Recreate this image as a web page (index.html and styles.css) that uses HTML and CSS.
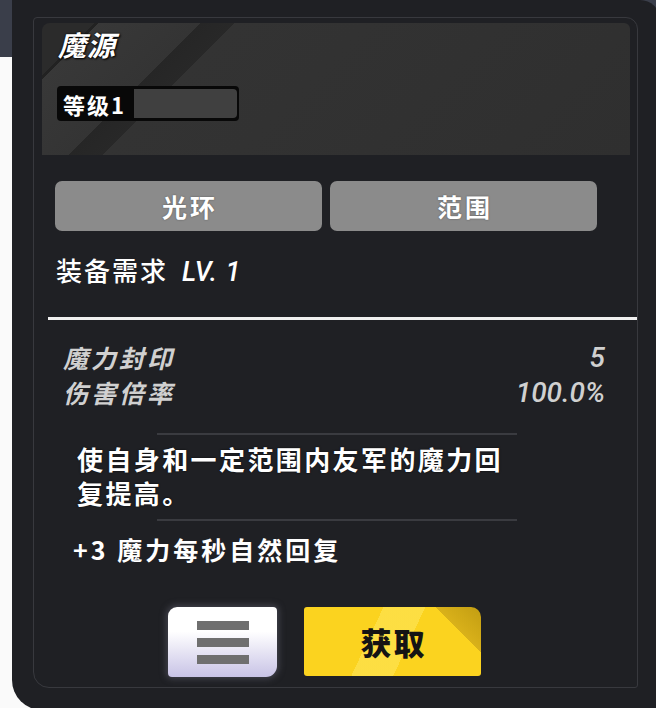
FILE: index.html
```html
<!DOCTYPE html>
<html lang="zh">
<head>
    <meta charset="UTF-8">
    <meta name="viewport" content="width=device-width, initial-scale=1.0">
    <title>魔源</title>
    <link rel="stylesheet" href="styles.css">
</head>
<body>
    <div class="panel">
        <div class="frame">
            <div class="banner">
                <div class="banner-title">魔源</div>
                <div class="level">
                    <span class="level-label">等级1</span>
                    <span class="level-bar"></span>
                </div>
            </div>

            <div class="tabs">
                <div class="tab">光环</div>
                <div class="tab">范围</div>
            </div>

            <div class="require">装备需求<span class="lv">LV. 1</span></div>
            <div class="rule"></div>

            <div class="stats">
                <div class="stat"><span class="stat-name">魔力封印</span><span class="stat-value">5</span></div>
                <div class="stat"><span class="stat-name">伤害倍率</span><span class="stat-value">100.0%</span></div>
            </div>

            <div class="divider"></div>
            <p class="desc">使自身和一定范围内友军的魔力回<br>复提高。</p>
            <div class="divider"></div>
            <p class="effect">+3 魔力每秒自然回复</p>

            <div class="actions">
                <button class="menu-btn"><span></span><span></span><span></span></button>
                <button class="get-btn">获取</button>
            </div>
        </div>
    </div>
</body>
</html>
```

FILE: styles.css
```css
html, body {
    margin: 0;
    overflow: hidden;
}
body {
    height: 708px;
    background: linear-gradient(#3a3e4a, #3a3e4a) no-repeat 0 0 / 100% 57px, #fafafa;
    font-family: "Noto Sans CJK SC", sans-serif;
    color: #fff;
}
.panel {
    margin-left: 12px;
    width: 648px;
    height: 710px;
    padding: 17px 0 0 21px;
    box-sizing: border-box;
    background: #1f2024;
    border-radius: 0 20px 0 30px;
}
.frame {
    width: 605px;
    height: 671px;
    box-sizing: border-box;
    padding: 5px 0 0 8px;
    border: 1px solid #38393e;
    border-radius: 4px 12px 3px 16px;
    display: flex;
    flex-direction: column;
}

/* header */
.banner {
    width: 588px;
    height: 132px;
    box-sizing: border-box;
    padding: 4px 0 0 16px;
    border-radius: 8px 6px 0 0;
    background: linear-gradient(135deg,
        #2b2b2b 0, #2b2b2b 37px,
        #222222 37px, #222222 40px,
        #383838 40px, #343434 112px,
        #262626 112px, #282828 136px,
        #333333 136px, #2f2f2f 100%);
}
.banner-title {
    font-size: 28px;
    line-height: 34px;
    font-weight: 700;
    font-style: italic;
    letter-spacing: 1px;
    text-shadow: 1px 1px 2px #000, 0 0 2px #000;
}
.level {
    margin: 25px 0 0 -1px;
    width: 182px;
    height: 35px;
    box-sizing: border-box;
    padding: 0 2px 0 6px;
    display: flex;
    align-items: center;
    background: #080808;
    border-radius: 4px;
}
.level-label {
    width: 71px;
    font-size: 22px;
    font-weight: 700;
    letter-spacing: 2px;
}
.level-bar {
    flex: 1;
    height: 29px;
    background: #404040;
    border-radius: 0 4px 4px 0;
}

/* tabs */
.tabs {
    display: flex;
    gap: 8px;
    margin: 26px 0 0 13px;
}
.tab {
    width: 267px;
    height: 50px;
    padding-left: 3px;
    box-sizing: border-box;
    display: flex;
    align-items: center;
    justify-content: center;
    background: #8b8b8b;
    border-radius: 7px;
    font-size: 25px;
    font-weight: 700;
    letter-spacing: 3px;
    text-shadow: 0 0 2px rgba(0, 0, 0, 0.4);
}

.require {
    margin: 24px 0 0 14px;
    font-size: 26px;
    line-height: 30px;
    font-weight: 500;
    letter-spacing: 2px;
}
.lv {
    margin-left: 14px;
    font-family: Roboto, sans-serif;
    font-style: italic;
    font-size: 27px;
    letter-spacing: 1px;
}
.rule {
    margin: 30px 0 0 6px;
    width: 589px;
    height: 3px;
    background: #f0f0f0;
}

/* stats */
.stats {
    margin: 20px 0 0 21px;
    width: 542px;
}
.stat {
    display: flex;
    justify-content: space-between;
    font-size: 25px;
    line-height: 35px;
    color: #d0d0d0;
    font-style: italic;
    font-weight: 700;
}
.stat-name {
    letter-spacing: 3px;
}
.stat-value {
    font-family: Roboto, sans-serif;
    font-size: 28px;
    font-weight: 500;
}

.divider {
    width: 360px;
    height: 2px;
    margin: 23px 0 0 115px;
    background: #3a3b40;
}
.desc {
    margin: 7px 0 0 35px;
    font-size: 26px;
    line-height: 34px;
    font-weight: 700;
    letter-spacing: 2.4px;
    text-shadow: 0 0 2px rgba(0, 0, 0, 0.8);
}
.desc + .divider {
    margin-top: 9px;
}
.effect {
    margin: 13px 0 0 31px;
    font-size: 25px;
    line-height: 30px;
    font-weight: 700;
    letter-spacing: 3px;
}

/* buttons */
.actions {
    display: flex;
    gap: 27px;
    margin: 43px 0 0 126px;
}
.menu-btn {
    width: 109px;
    height: 70px;
    padding: 0;
    border: 0;
    border-radius: 9px 4px 11px 4px;
    background: linear-gradient(#ffffff 35%, #c8c3e6);
    box-shadow: 0 0 6px 2px rgba(80, 80, 92, 0.7);
    display: flex;
    flex-direction: column;
    align-items: center;
    justify-content: center;
    gap: 8px;
}
.menu-btn span {
    width: 52px;
    height: 9px;
    background: #6f6f6f;
}
.get-btn {
    width: 177px;
    height: 69px;
    padding: 0 0 0 2px;
    border: 0;
    border-radius: 3px 10px 3px 3px;
    background:
        linear-gradient(225deg, #c29d12 0, #d9b11a 32px, transparent 32px),
        linear-gradient(115deg, transparent 38%, rgba(255, 236, 110, 0.45) 38%, rgba(255, 236, 110, 0.45) 58%, transparent 58%),
        #fbd31f;
    font-family: "Noto Sans CJK SC", sans-serif;
    font-size: 31px;
    font-weight: 900;
    letter-spacing: 2px;
    color: #141414;
}
```
